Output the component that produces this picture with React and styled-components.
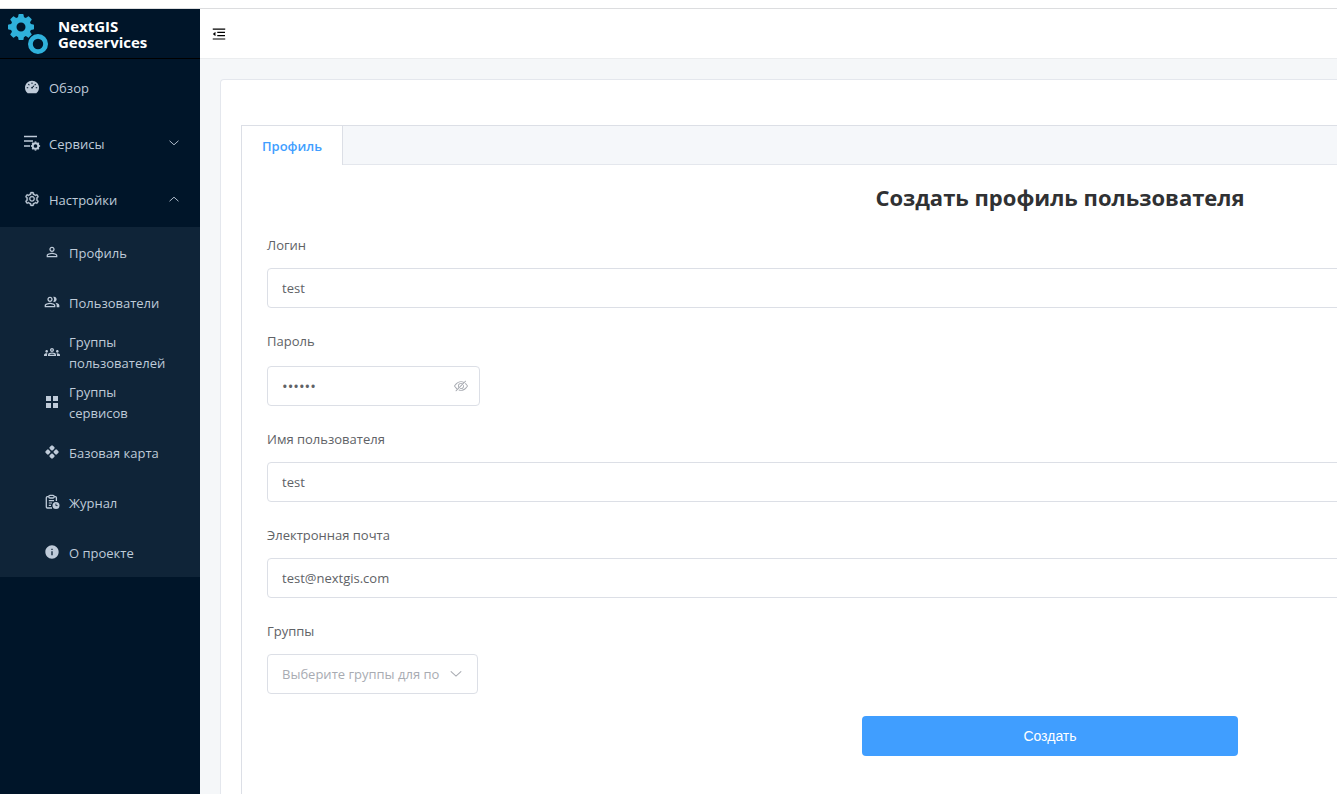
import React, { useState } from 'react';
import styled, { createGlobalStyle, css } from 'styled-components';
import { AiFillDashboard, AiOutlineSetting, AiOutlineMenuFold } from 'react-icons/ai';
import { MdPersonOutline, MdOutlinePeopleAlt, MdOutlineGroups, MdInfo } from 'react-icons/md';

const GlobalStyle = createGlobalStyle`
  *, *::before, *::after { box-sizing: border-box; }
  html { overflow-x: hidden; background: #fff; }
  body {
    margin: 0;
    overflow: hidden;
    font-family: "Segoe UI", "Open Sans", "Noto Sans", sans-serif;
    font-size: 13px;
    color: #606266;
  }
`;

const Page = styled.div`
  min-width: 1920px;
  min-height: 100vh;
  padding-top: 8px;
  display: flex;
  flex-direction: column;
`;

const Shell = styled.div`
  flex: 1;
  display: flex;
  border-top: 1px solid #dcdddf;
`;

const Sidebar = styled.aside`
  width: 200px;
  flex: none;
  background: #001529;
`;

const Brand = styled.a`
  display: flex;
  align-items: center;
  gap: 10px;
  height: 50px;
  padding-left: 8px;
  border-bottom: 1px solid #000;
  color: #fff;
  font-size: 15px;
  font-weight: 700;
  line-height: 16px;
  text-decoration: none;
`;

const MenuList = styled.ul`
  list-style: none;
  margin: 0;
  padding: 0;
`;

const SubMenuList = styled(MenuList)`
  background: #0f2438;
`;

const entry = css`
  display: flex;
  align-items: center;
  gap: 5px;
  width: 100%;
  border: 0;
  background: none;
  font: inherit;
  line-height: 21px;
  text-align: left;
  text-decoration: none;
  color: #bfcbd9;
  cursor: pointer;
`;

const MenuLink = styled.a`
  ${entry}
  height: ${(p) => (p.$nested ? 50 : 56)}px;
  padding: ${(p) => (p.$nested ? '0 30px 0 40px' : '0 20px')};
`;

const MenuToggle = styled.button`
  ${entry}
  height: 56px;
  padding: 0 20px;
`;

const MenuIcon = styled.span`
  display: flex;
  justify-content: center;
  flex: none;
  width: 24px;
  font-size: 16px;
`;

const MenuText = styled.span`
  flex: 1;
  padding-top: 2px;
`;

const Main = styled.main`
  flex: 1;
  display: flex;
  flex-direction: column;
  background: #f5f7f9;
`;

const TopBar = styled.header`
  display: flex;
  align-items: center;
  height: 50px;
  padding: 0 11px;
  background: #fff;
  border-bottom: 1px solid #ebedef;
`;

const FoldButton = styled.button`
  display: flex;
  padding: 0;
  border: 0;
  background: none;
  color: #000;
  font-size: 16px;
  cursor: pointer;
`;

const Card = styled.section`
  flex: 1;
  margin: 20px 20px 0;
  padding: 45px 20px 0;
  display: flex;
  flex-direction: column;
  background: #fff;
  border: 1px solid #e4e7ed;
  border-bottom: 0;
  border-radius: 4px 4px 0 0;
`;

const Tabs = styled.div`
  flex: 1;
  border: 1px solid #dcdfe6;
  border-bottom: 0;
`;

const TabStrip = styled.div`
  display: flex;
  height: 39px;
  background: #f5f7fa;
  border-bottom: 1px solid #e4e7ed;
`;

const Tab = styled.button`
  height: 39px;
  padding: 0 20px;
  border: 0;
  border-right: 1px solid #dcdfe6;
  background: #fff;
  color: #409eff;
  font: inherit;
  font-weight: 600;
  cursor: pointer;
`;

const Panel = styled.div`
  padding: 15px 15px 24px;
`;

const Title = styled.h2`
  margin: 0 0 20px;
  color: #303133;
  font-size: 22px;
  font-weight: 700;
  line-height: 34px;
  text-align: center;
`;

const Form = styled.form`
  display: flex;
  flex-direction: column;
  gap: 22px;
  padding: 0 30px 0 10px;
`;

const Field = styled.div`
  display: flex;
  flex-direction: column;
  align-items: flex-start;
  gap: ${(p) => (p.$roomy ? 14 : 12)}px;
`;

const Label = styled.label`
  line-height: 22px;
`;

const control = css`
  height: 40px;
  padding: 0 14px;
  border: 1px solid #dcdfe6;
  border-radius: 4px;
  background: #fff;
  color: #606266;
  font: inherit;
  outline: none;
`;

const Input = styled.input`
  ${control}
  width: 100%;
`;

const PasswordBox = styled.div`
  ${control}
  display: flex;
  align-items: center;
  width: 213px;
  padding-right: 11px;
`;

const PasswordInput = styled.input`
  flex: 1;
  min-width: 0;
  padding: 0;
  border: 0;
  background: none;
  color: inherit;
  font: inherit;
  font-size: 15px;
  outline: none;
`;

const RevealButton = styled.button`
  display: flex;
  padding: 0;
  border: 0;
  background: none;
  color: #a8abb2;
  cursor: pointer;
`;

const SelectBox = styled.div`
  display: grid;
  align-items: center;
  width: 211px;

  > * { grid-area: 1 / 1; }
  > svg {
    justify-self: end;
    margin-right: 15px;
    pointer-events: none;
    color: #a8abb2;
  }
`;

const Select = styled.select`
  ${control}
  width: 100%;
  padding-right: 30px;
  appearance: none;
  color: #a8abb2;
`;

const Submit = styled.button`
  align-self: center;
  width: 24%;
  height: 40px;
  border: 0;
  border-radius: 4px;
  background: #409eff;
  color: #fff;
  font: 500 14px "Liberation Sans", Arial, sans-serif;
  cursor: pointer;
`;

const GEAR_ANGLES = [0, 45, 90, 135, 180, 225, 270, 315];

const Logo = () => (
  <svg width="40" height="40" viewBox="0 0 40 40" aria-hidden="true" fill="none" stroke="#2fb1db">
    <circle cx="13" cy="13" r="7.4" strokeWidth="5.8" />
    {GEAR_ANGLES.map((a) => (
      <path key={a} d="M9.8 4.5L10.5 0.6Q10.6 0 11.2 0H14.8Q15.4 0 15.5 0.6L16.2 4.5Z" fill="#2fb1db" stroke="none" transform={`rotate(${a} 13 13)`} />
    ))}
    <circle cx="30" cy="30" r="10.8" fill="#001529" stroke="none" />
    <circle cx="30" cy="30" r="7.6" strokeWidth="4.8" />
  </svg>
);

const ServicesIcon = () => (
  <svg width="18" height="18" viewBox="0 0 18 18" aria-hidden="true" stroke="currentColor" fill="none">
    <path d="M1 2.5H14M1 7H10M1 12H7" strokeWidth="1.7" />
    <circle cx="12.5" cy="12" r="2.8" strokeWidth="1.9" />
    {GEAR_ANGLES.map((a) => (
      <path key={a} d="M12.5 8.6V7.4" strokeWidth="1.7" transform={`rotate(${a} 12.5 12)`} />
    ))}
  </svg>
);

const TilesIcon = () => (
  <svg width="16" height="16" viewBox="0 0 16 16" aria-hidden="true" fill="currentColor">
    <path d="M2 2h5v5H2zM9 2h5v5H9zM2 9h5v5H2zM9 9h5v5H9z" />
  </svg>
);

const DIAMONDS = [[8, 3.9], [3.9, 8], [12.1, 8], [8, 12.1]];

const BasemapIcon = () => (
  <svg width="16" height="16" viewBox="0 0 16 16" aria-hidden="true" fill="currentColor">
    {DIAMONDS.map(([x, y]) => (
      <rect key={`${x}-${y}`} x={x - 2.2} y={y - 2.2} width="4.4" height="4.4" rx="1.2" transform={`rotate(45 ${x} ${y})`} />
    ))}
  </svg>
);

const JournalIcon = () => (
  <svg width="16" height="16" viewBox="0 0 16 16" aria-hidden="true" fill="none" stroke="currentColor" strokeWidth="1.3">
    <path d="M4.6 2.7H3.3Q2.3 2.7 2.3 3.7V13Q2.3 14 3.3 14H8M10.4 2.7H11.4Q12.4 2.7 12.4 3.7V7" />
    <rect x="4.8" y="1.4" width="5.4" height="2.6" rx="1.2" />
    <path d="M4.8 6.6H10M4.8 9H8M4.8 11.4H7" strokeWidth="1.2" />
    <circle cx="12" cy="11.4" r="3.5" fill="currentColor" stroke="none" />
    <path d="M11.9 9.6V11.6H13.6" stroke="#0f2438" strokeWidth="0.9" />
  </svg>
);

const Chevron = ({ size = 12, up = false }) => (
  <svg width={size} height={size} viewBox="0 0 12 12" aria-hidden="true" fill="none" stroke="currentColor" strokeWidth="0.9">
    <path d={up ? 'M1.8 8L6 4.2L10.2 8' : 'M1.8 4L6 7.8L10.2 4'} strokeLinecap="round" />
  </svg>
);

const HideIcon = () => (
  <svg width="14" height="14" viewBox="0 0 1024 1024" aria-hidden="true" fill="currentColor">
    <path d="M876.8 156.8c0-9.6-3.2-16-9.6-22.4-6.4-6.4-12.8-9.6-22.4-9.6-9.6 0-16 3.2-22.4 9.6L736 220.8c-64-32-137.6-51.2-224-60.8-160 16-288 73.6-377.6 176C44.8 438.4 0 496 0 512s48 73.6 134.4 176c22.4 25.6 44.8 48 73.6 67.2l-86.4 89.6c-6.4 6.4-9.6 12.8-9.6 22.4 0 9.6 3.2 16 9.6 22.4 6.4 6.4 12.8 9.6 22.4 9.6 9.6 0 16-3.2 22.4-9.6l704-710.4c3.2-6.4 6.4-12.8 6.4-22.4Zm-646.4 528c-76.8-70.4-128-128-153.6-172.8 28.8-48 80-105.6 153.6-172.8C304 272 400 230.4 512 224c64 3.2 124.8 19.2 176 44.8l-54.4 54.4C598.4 300.8 560 288 512 288c-64 0-115.2 22.4-160 64s-64 96-64 160c0 48 12.8 89.6 35.2 124.8L256 707.2c-9.6-6.4-19.2-16-25.6-22.4Zm140.8-96c-12.8-22.4-19.2-48-19.2-76.8 0-44.8 16-83.2 48-112 32-28.8 67.2-48 112-48 28.8 0 54.4 6.4 73.6 19.2L371.2 588.8ZM889.6 336c-12.8-16-28.8-28.8-41.6-41.6l-48 48c73.6 67.2 124.8 124.8 150.4 169.6-28.8 48-80 105.6-153.6 172.8-73.6 67.2-172.8 108.8-284.8 115.2-51.2-3.2-99.2-12.8-140.8-28.8l-48 48c57.6 22.4 118.4 38.4 188.8 44.8 160-16 288-73.6 377.6-176C979.2 585.6 1024 528 1024 512s-48-73.6-134.4-176Z" />
    <path d="M512 672c-12.8 0-25.6-3.2-38.4-6.4l-51.2 51.2c28.8 12.8 57.6 19.2 89.6 19.2 64 0 115.2-22.4 160-64 41.6-41.6 64-96 64-160 0-32-6.4-64-19.2-89.6l-51.2 51.2c3.2 12.8 6.4 25.6 6.4 38.4 0 44.8-16 83.2-48 112-32 28.8-67.2 48-112 48Z" />
  </svg>
);

const SETTINGS_ITEMS = [
  { text: 'Профиль', icon: MdPersonOutline },
  { text: 'Пользователи', icon: MdOutlinePeopleAlt },
  { text: 'Группы пользователей', icon: MdOutlineGroups },
  { text: 'Группы сервисов', icon: TilesIcon },
  { text: 'Базовая карта', icon: BasemapIcon },
  { text: 'Журнал', icon: JournalIcon },
  { text: 'О проекте', icon: MdInfo },
];

const TextField = ({ id, label, type = 'text', value }) => (
  <Field>
    <Label htmlFor={id}>{label}</Label>
    <Input id={id} type={type} defaultValue={value} />
  </Field>
);

export default function App() {
  const [open, setOpen] = useState(true);
  const [visible, setVisible] = useState(false);

  return (
    <>
      <GlobalStyle />
      <Page>
        <Shell>
          <Sidebar>
            <Brand href="#">
              <Logo />
              <span>NextGIS<br />Geoservices</span>
            </Brand>
            <nav>
              <MenuList>
                <li>
                  <MenuLink href="#">
                    <MenuIcon><AiFillDashboard /></MenuIcon>
                    <MenuText>Обзор</MenuText>
                  </MenuLink>
                </li>
                <li>
                  <MenuToggle type="button">
                    <MenuIcon><ServicesIcon /></MenuIcon>
                    <MenuText>Сервисы</MenuText>
                    <Chevron />
                  </MenuToggle>
                </li>
                <li>
                  <MenuToggle type="button" aria-expanded={open} onClick={() => setOpen(!open)}>
                    <MenuIcon><AiOutlineSetting strokeWidth="24" /></MenuIcon>
                    <MenuText>Настройки</MenuText>
                    <Chevron up={open} />
                  </MenuToggle>
                  {open && (
                    <SubMenuList>
                      {SETTINGS_ITEMS.map(({ text, icon: Icon }) => (
                        <li key={text}>
                          <MenuLink href="#" $nested>
                            <MenuIcon><Icon /></MenuIcon>
                            <MenuText>{text}</MenuText>
                          </MenuLink>
                        </li>
                      ))}
                    </SubMenuList>
                  )}
                </li>
              </MenuList>
            </nav>
          </Sidebar>
          <Main>
            <TopBar>
              <FoldButton type="button" aria-label="Свернуть меню">
                <AiOutlineMenuFold />
              </FoldButton>
            </TopBar>
            <Card>
              <Tabs>
                <TabStrip role="tablist">
                  <Tab type="button" role="tab" aria-selected="true">Профиль</Tab>
                </TabStrip>
                <Panel role="tabpanel">
                  <Title>Создать профиль пользователя</Title>
                  <Form onSubmit={(e) => e.preventDefault()}>
                    <TextField id="login" label="Логин" value="test" />
                    <Field $roomy>
                      <Label htmlFor="password">Пароль</Label>
                      <PasswordBox>
                        <PasswordInput id="password" type={visible ? 'text' : 'password'} defaultValue="secret" />
                        <RevealButton type="button" aria-label="Показать пароль" onClick={() => setVisible(!visible)}>
                          <HideIcon />
                        </RevealButton>
                      </PasswordBox>
                    </Field>
                    <TextField id="name" label="Имя пользователя" value="test" />
                    <TextField id="email" label="Электронная почта" type="email" value="test@nextgis.com" />
                    <Field>
                      <Label htmlFor="groups">Группы</Label>
                      <SelectBox>
                        <Select id="groups" defaultValue="">
                          <option value="">Выберите группы для по</option>
                        </Select>
                        <Chevron size={14} />
                      </SelectBox>
                    </Field>
                    <Submit type="submit">Создать</Submit>
                  </Form>
                </Panel>
              </Tabs>
            </Card>
          </Main>
        </Shell>
      </Page>
    </>
  );
}
